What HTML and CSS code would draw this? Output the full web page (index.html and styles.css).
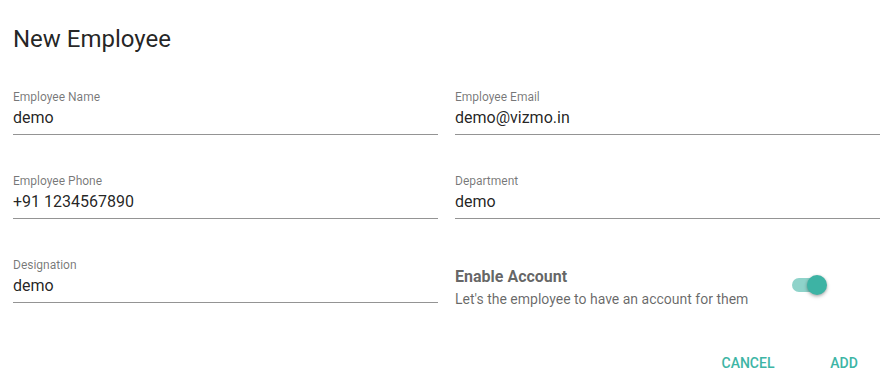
FILE: index.html
```html
<!DOCTYPE html>
<html lang="en">
<head>
<meta charset="utf-8">
<title>New Employee</title>
<link rel="stylesheet" href="styles.css">
</head>
<body>
<div class="dialog">
  <h2 class="title">New Employee</h2>
  <div class="form">
    <div class="field">
      <div class="label">Employee Name</div>
      <div class="value">demo</div>
    </div>
    <div class="field">
      <div class="label">Employee Email</div>
      <div class="value">demo@vizmo.in</div>
    </div>
    <div class="field">
      <div class="label">Employee Phone</div>
      <div class="value">+91 1234567890</div>
    </div>
    <div class="field">
      <div class="label">Department</div>
      <div class="value">demo</div>
    </div>
    <div class="field">
      <div class="label">Designation</div>
      <div class="value">demo</div>
    </div>
    <div class="toggle-row">
      <div class="toggle-text">
        <div class="toggle-title">Enable Account</div>
        <div class="toggle-sub">Let's the employee to have an account for them</div>
      </div>
      <div class="switch">
        <span class="track"></span>
        <span class="thumb"></span>
      </div>
    </div>
  </div>
  <div class="actions">
    <button class="btn">CANCEL</button>
    <button class="btn">ADD</button>
  </div>
</div>
</body>
</html>
```
FILE: styles.css
```css
html, body {
  margin: 0;
  padding: 0;
  background: #ffffff;
}
body {
  font-family: Roboto, "Liberation Sans", Arial, sans-serif;
  width: 895px;
  height: 388px;
  overflow: hidden;
}
.dialog {
  padding: 23px 0 0 13px;
}
.title {
  margin: 0;
  font-size: 24px;
  line-height: 32px;
  font-weight: 400;
  color: rgba(0, 0, 0, 0.87);
}
.form {
  margin-top: 34px;
  display: grid;
  grid-template-columns: 425px 425px;
  column-gap: 17px;
  row-gap: 38px;
  align-items: start;
}
.field {
  border-bottom: 1px solid rgba(0, 0, 0, 0.42);
  padding-bottom: 4px;
}
.label {
  font-size: 12px;
  line-height: 17px;
  color: rgba(0, 0, 0, 0.54);
}
.value {
  font-size: 16px;
  line-height: 24px;
  color: rgba(0, 0, 0, 0.87);
}
.toggle-row {
  display: flex;
  align-items: flex-start;
  padding-top: 9px;
}
.toggle-title {
  font-size: 16px;
  line-height: 22px;
  font-weight: 700;
  color: rgba(0, 0, 0, 0.62);
}
.toggle-sub {
  margin-top: 1px;
  font-size: 14px;
  line-height: 20px;
  color: rgba(0, 0, 0, 0.6);
}
.switch {
  position: relative;
  width: 35px;
  height: 20px;
  margin-left: auto;
  margin-right: 53px;
  margin-top: 9px;
}
.track {
  position: absolute;
  left: 0;
  top: 3px;
  width: 32px;
  height: 14px;
  border-radius: 7px;
  background: #8fd3ca;
}
.thumb {
  position: absolute;
  right: 0;
  top: 0;
  width: 20px;
  height: 20px;
  border-radius: 50%;
  background: #3db3a4;
  box-shadow: 0 1px 3px rgba(0, 0, 0, 0.25), 0 2px 4px rgba(0, 0, 0, 0.15);
}
.actions {
  display: flex;
  justify-content: flex-end;
  gap: 8px;
  margin-top: 36px;
  padding-right: 7px;
}
.btn {
  min-width: 88px;
  height: 36px;
  padding: 0 16px;
  border: none;
  background: transparent;
  font-family: Roboto, "Liberation Sans", Arial, sans-serif;
  font-size: 14px;
  font-weight: 500;
  line-height: 36px;
  color: #3db5a5;
  text-align: center;
  cursor: pointer;
}
```
